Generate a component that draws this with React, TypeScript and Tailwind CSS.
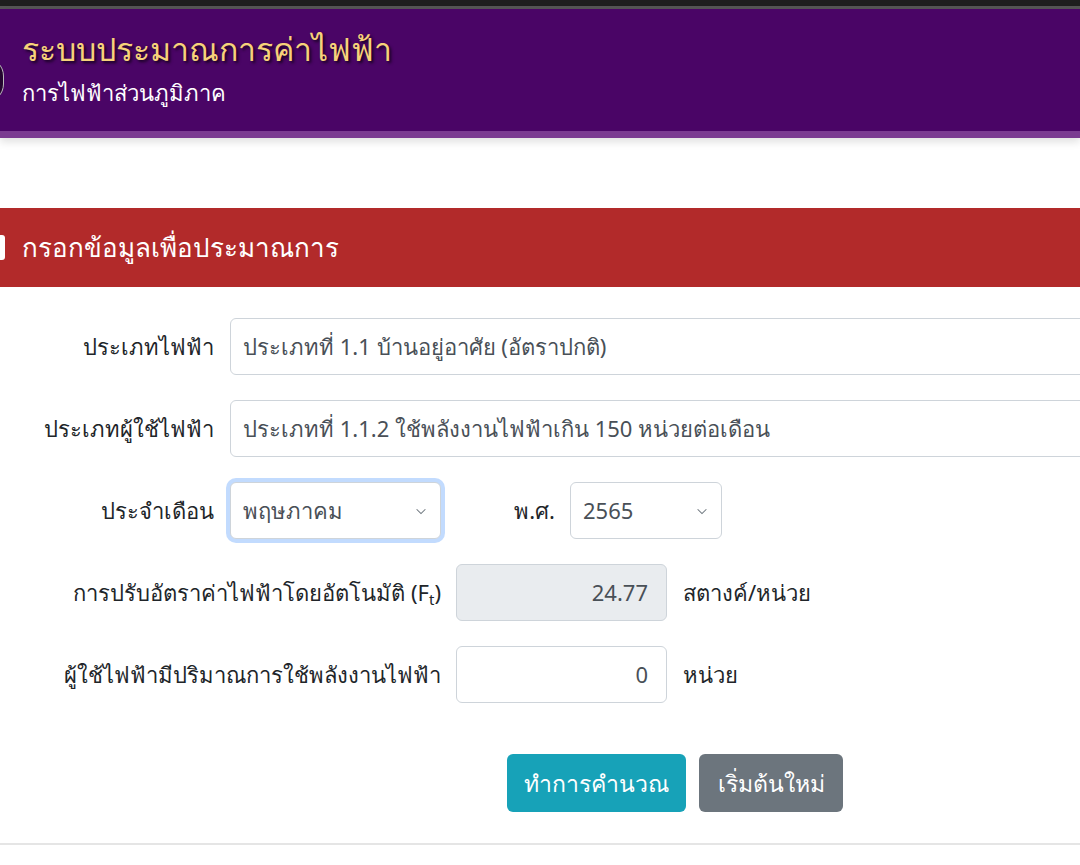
import React, { useState } from 'react';

const fieldBase =
  'h-[57px] shrink-0 rounded-[6px] border border-[#ced4da] px-3 text-[22px] text-[#495057] flex items-center';

const Chevron: React.FC = () => (
  <svg width="14" height="14" viewBox="0 0 16 16" className="text-[#6c757d]">
    <path d="M3 6l5 5 5-5" fill="none" stroke="currentColor" strokeWidth="1.2" />
  </svg>
);

export default function App() {
  const [units] = useState('0');

  return (
    <div className="w-[1080px] h-[865px] overflow-hidden bg-white font-['Noto_Sans','DejaVu_Sans',sans-serif] font-normal text-[#212529]">
      {/* top strip */}
      <div className="h-[6px] bg-[#1e1e1e]" />
      <div className="h-[3px] bg-[#555]" />

      {/* header */}
      <header className="relative shadow-[0_4px_8px_rgba(0,0,0,0.12)]">
        <div className="h-[122px] bg-[#4a0566] px-[22px] pt-[18px]">
          <h1 className="text-[32px] leading-[44px] text-[#f7d27a] [text-shadow:2px_2px_3px_rgba(0,0,0,0.7)]">
            ระบบประมาณการค่าไฟฟ้า
          </h1>
          <p className="pt-[4px] text-[22px] leading-[34px] text-white">การไฟฟ้าส่วนภูมิภาค</p>
        </div>
        <div className="h-[7px] bg-[#7b3b91]" />
        <div className="absolute left-[-34px] top-[48px] h-[46px] w-[38px] rounded-full bg-[#24062f] border border-[#bbb]" />
      </header>

      <div className="h-[70px]" />

      {/* section bar */}
      <div className="relative flex h-[79px] items-center bg-[#b22a2a] pl-[22px]">
        <div className="absolute left-[-4px] top-[27px] h-[25px] w-[9px] rounded-[3px] bg-white" />
        <h2 className="text-[26px] text-white">กรอกข้อมูลเพื่อประมาณการ</h2>
      </div>

      {/* form */}
      <div className="flex flex-col gap-[25px] pt-[31px]">
        <div className="flex items-center gap-4">
          <label className="w-[214px] shrink-0 text-right text-[22px]">ประเภทไฟฟ้า</label>
          <div className={`${fieldBase} w-[900px] bg-white`}>ประเภทที่ 1.1 บ้านอยู่อาศัย (อัตราปกติ)</div>
        </div>

        <div className="flex items-center gap-4">
          <label className="w-[214px] shrink-0 whitespace-nowrap text-right text-[22px]">ประเภทผู้ใช้ไฟฟ้า</label>
          <div className={`${fieldBase} w-[900px] bg-white`}>
            ประเภทที่ 1.1.2 ใช้พลังงานไฟฟ้าเกิน 150 หน่วยต่อเดือน
          </div>
        </div>

        <div className="flex items-center">
          <label className="w-[214px] shrink-0 text-right text-[22px]">ประจำเดือน</label>
          <div
            className={`${fieldBase} ml-4 w-[211px] justify-between border-[#86b7fe] bg-white shadow-[0_0_0_4px_rgba(13,110,253,0.25)]`}
          >
            <span>พฤษภาคม</span>
            <Chevron />
          </div>
          <label className="w-[114px] shrink-0 text-right text-[22px]">พ.ศ.</label>
          <div className={`${fieldBase} ml-[15px] w-[152px] justify-between bg-white`}>
            <span>2565</span>
            <Chevron />
          </div>
        </div>

        <div className="flex items-center">
          <label className="w-[441px] shrink-0 whitespace-nowrap text-right text-[22px]">
            การปรับอัตราค่าไฟฟ้าโดยอัตโนมัติ (F<sub className="text-[15px]">t</sub>)
          </label>
          <div className={`${fieldBase} ml-[15px] w-[211px] justify-end bg-[#e9ecef] pr-[18px]`}>24.77</div>
          <span className="ml-4 text-[22px]">สตางค์/หน่วย</span>
        </div>

        <div className="flex items-center">
          <label className="w-[441px] shrink-0 whitespace-nowrap text-right text-[22px]">ผู้ใช้ไฟฟ้ามีปริมาณการใช้พลังงานไฟฟ้า</label>
          <div className={`${fieldBase} ml-[15px] w-[211px] justify-end bg-white pr-[18px]`}>{units}</div>
          <span className="ml-4 text-[22px]">หน่วย</span>
        </div>

        <div className="flex gap-[13px] pl-[507px] pt-[26px]">
          <button className="h-[58px] w-[179px] rounded-[6px] bg-[#17a2b8] text-[23px] text-white">
            ทำการคำนวณ
          </button>
          <button className="h-[58px] w-[144px] rounded-[6px] bg-[#6c757d] text-[23px] text-white">
            เริ่มต้นใหม่
          </button>
        </div>
      </div>

      <div className="mt-[31px] h-[2px] bg-[#e5e5e5]" />
    </div>
  );
}
